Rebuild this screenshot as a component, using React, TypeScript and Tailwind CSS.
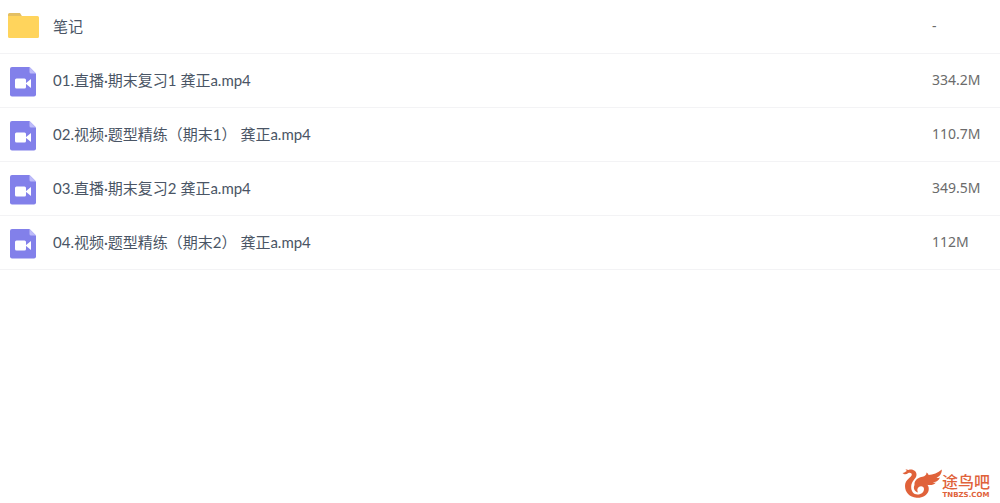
import React from "react";

type FileItem = {
  name: string;
  size: string;
  type: "folder" | "video";
};

const files: FileItem[] = [
  { name: "笔记", size: "-", type: "folder" },
  { name: "01.直播·期末复习1 龚正a.mp4", size: "334.2M", type: "video" },
  { name: "02.视频·题型精练（期末1） 龚正a.mp4", size: "110.7M", type: "video" },
  { name: "03.直播·期末复习2 龚正a.mp4", size: "349.5M", type: "video" },
  { name: "04.视频·题型精练（期末2） 龚正a.mp4", size: "112M", type: "video" },
];

const FolderIcon = () => (
  <svg width="32" height="26" viewBox="0 0 32 26" aria-hidden="true">
    <path d="M1.500 0h10.500l2.500 4H0V1.500A1.500 1.500 0 0 1 1.500 0z" fill="#e3bf63" />
    <path
      d="M0 3h29.500a1.500 1.500 0 0 1 1.500 1.500v19a1.500 1.500 0 0 1-1.500 1.500h-28A1.500 1.500 0 0 1 0 23.500z"
      fill="#ffd45c"
    />
  </svg>
);

const VideoIcon = () => (
  <svg width="27" height="30" viewBox="0 0 27 30" aria-hidden="true">
    <path
      d="M2 0H19.500L26 6.500V27.500a2 2 0 0 1-2 2H2a2 2 0 0 1-2-2V2a2 2 0 0 1 2-2z"
      fill="#8280ea"
    />
    <path d="M19.500 0L26 6.500H21a1.500 1.500 0 0 1-1.500-1.500z" fill="#bdbbfa" />
    <rect x="5" y="11.500" width="11" height="10" rx="1.500" fill="#fff" />
    <path d="M15.500 16.500L21 12v9z" fill="#fff" />
  </svg>
);

const Logo = () => (
  <div className="flex items-end text-[#e0623a]">
    <svg width="40" height="32" viewBox="0 0 40 32" aria-hidden="true">
      {/* head and body */}
      <path
        d="M0.500 6C2.500 5.800 3.500 4.800 4.800 4L3.500 2.200L6.500 3C10.500 1.500 14.800 4 14.500 8C14.200 12 9.500 13.500 9.200 19.500C9 24 11.500 27.500 15.500 27.500C19.500 27.500 22 25 22 22C22 19.500 19 18.500 16.800 20C15 21.300 15 23.500 16 25.500C12.300 24.500 11 21 12.500 18C14 15 18 14.500 21.500 15.500C26 16.500 27.500 20.500 26.500 24C25 28.500 20 31.200 14.500 30.700C7.500 30 3 25.500 3 19C3 12.500 9.500 10.500 9.800 7.800C9.900 6 7.800 5.300 6 6.300C4.500 7.200 2.500 8 0.500 6z"
        fill="currentColor"
      />
      {/* wing */}
      <path
        d="M12.500 18C12 12.500 17 10.500 20.500 9.800C23 9.200 24.500 8 24.500 5.500C26 6.500 26.500 7.300 26.500 8C31 7.500 36 6 39.800 2.500C40 6.500 37.500 9.500 34.500 11C35.500 11.200 36.500 11 38 10.500C36.500 14 33.500 15.200 31 15.500C32 15.800 33 15.800 34 15.500C31.500 18.500 27.500 18.500 23.500 17.500C19 16.500 15 15 12.500 18z"
        fill="currentColor"
      />
    </svg>
    <div className="flex flex-col items-center">
      <span className="font-['Noto_Sans_CJK_SC',sans-serif] text-base leading-5 font-medium">
        途鸟吧
      </span>
      <span className="font-['DejaVu_Sans',sans-serif] text-[7px] leading-2 font-bold">
        TNBZS.COM
      </span>
    </div>
  </div>
);

const App = () => {
  return (
    <div className="flex min-h-screen flex-col bg-white font-['Noto_Sans','Noto_Sans_CJK_SC',sans-serif]">
      <table className="w-full border-collapse text-left">
        <tbody>
          {files.map((file) => (
            <tr
              key={file.name}
              className="h-[54px] border-b border-[#f3f3f5] first:h-[53px]"
            >
              <td className="w-[53px] pl-2">
                {file.type === "folder" ? (
                  <FolderIcon />
                ) : (
                  <div className="pt-1 pl-0.5">
                    <VideoIcon />
                  </div>
                )}
              </td>
              <td className="font-['Lato','Noto_Sans_CJK_SC',sans-serif] text-[15px] leading-5 text-[#4a5565]">
                <a href="#">{file.name}</a>
              </td>
              <td className="w-[68px] text-sm leading-5 text-[#6b6b6b]">
                {file.size}
              </td>
            </tr>
          ))}
        </tbody>
      </table>

      <footer className="mt-auto flex justify-end pr-2.5 pb-1">
        <Logo />
      </footer>
    </div>
  );
};

export default App;
